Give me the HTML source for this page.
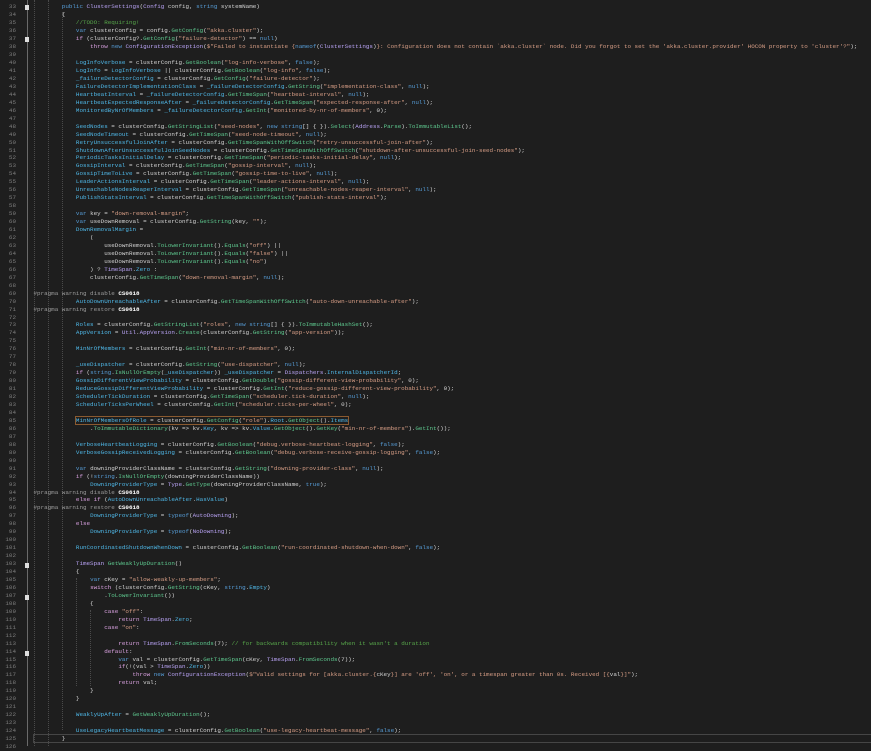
<!DOCTYPE html>
<html><head><meta charset="utf-8">
<style>
html,body{margin:0;padding:0;background:#1e1e1e;width:871px;height:746px;overflow:hidden}
#ed{position:absolute;left:0;top:-4.6px;width:871px}
.l{position:relative;height:7.962px;line-height:7.962px;white-space:pre;font-family:"Liberation Mono",monospace;font-size:5.9px;color:#d4d4d4}
.n{position:absolute;left:0;width:16px;text-align:right;color:#7e7e7e}
.c0{position:absolute;left:33.5px}
.k{color:#569cd6}.c{color:#d8a0df}.t{color:#b9a3f5}.p{color:#4fb8e8}.m{color:#5ec98f}.s{color:#d69d85}.g{color:#57a64a}.pr{color:#9b9b9b}.w{color:#fff;font-weight:bold}.r{color:#8a8a8a;font-size:4.5px}
.gl{position:absolute;width:0;border-left:1px dotted #4a4a4a}
.fold{position:absolute;left:25px;width:4px;height:5px;background:#ddd}
</style></head><body>
<div style="position:absolute;left:27px;top:0;width:1px;height:746px;background:#6a6a6a"></div>
<div class="gl" style="left:34px;top:0;height:746px"></div>
<div class="gl" style="left:48px;top:0;height:746px"></div>
<div class="gl" style="left:62px;top:12px;height:718px"></div>
<div class="gl" style="left:76px;top:578px;height:108px"></div>
<div class="gl" style="left:90px;top:610px;height:76px"></div>
<div class="fold" style="top:5px"></div>
<div class="fold" style="top:37px"></div>
<div class="fold" style="top:563px"></div>
<div class="fold" style="top:595px"></div>
<div class="fold" style="top:651px"></div>
<div style="position:absolute;left:33px;top:734px;width:838px;height:7px;border:1px solid #464646"></div>
<div id="ed">
<div class="l"><span class="c0">        <span class="r">0 references</span></span></div>
<div class="l"><span class="n">33</span><span class="c0">        <span class="k">public</span> <span class="t">ClusterSettings</span>(<span class="t">Config</span> config, <span class="k">string</span> systemName)</span></div>
<div class="l"><span class="n">34</span><span class="c0">        {</span></div>
<div class="l"><span class="n">35</span><span class="c0">            <span class="g">//TODO: Requiring!</span></span></div>
<div class="l"><span class="n">36</span><span class="c0">            <span class="k">var</span> clusterConfig = config.<span class="m">GetConfig</span>(<span class="s">"akka.cluster"</span>);</span></div>
<div class="l"><span class="n">37</span><span class="c0">            <span class="c">if</span> (clusterConfig?.<span class="m">GetConfig</span>(<span class="s">"failure-detector"</span>) == <span class="k">null</span>)</span></div>
<div class="l"><span class="n">38</span><span class="c0">                <span class="c">throw</span> <span class="k">new</span> <span class="t">ConfigurationException</span>(<span class="s">$"Failed to instantiate {</span><span class="k">nameof</span>(<span class="t">ClusterSettings</span>)<span class="s">}: Configuration does not contain `akka.cluster` node. Did you forgot to set the 'akka.cluster.provider' HOCON property to 'cluster'?"</span>);</span></div>
<div class="l"><span class="n">39</span></div>
<div class="l"><span class="n">40</span><span class="c0">            <span class="p">LogInfoVerbose</span> = clusterConfig.<span class="m">GetBoolean</span>(<span class="s">"log-info-verbose"</span>, <span class="k">false</span>);</span></div>
<div class="l"><span class="n">41</span><span class="c0">            <span class="p">LogInfo</span> = <span class="p">LogInfoVerbose</span> || clusterConfig.<span class="m">GetBoolean</span>(<span class="s">"log-info"</span>, <span class="k">false</span>);</span></div>
<div class="l"><span class="n">42</span><span class="c0">            <span class="p">_failureDetectorConfig</span> = clusterConfig.<span class="m">GetConfig</span>(<span class="s">"failure-detector"</span>);</span></div>
<div class="l"><span class="n">43</span><span class="c0">            <span class="p">FailureDetectorImplementationClass</span> = <span class="p">_failureDetectorConfig</span>.<span class="m">GetString</span>(<span class="s">"implementation-class"</span>, <span class="k">null</span>);</span></div>
<div class="l"><span class="n">44</span><span class="c0">            <span class="p">HeartbeatInterval</span> = <span class="p">_failureDetectorConfig</span>.<span class="m">GetTimeSpan</span>(<span class="s">"heartbeat-interval"</span>, <span class="k">null</span>);</span></div>
<div class="l"><span class="n">45</span><span class="c0">            <span class="p">HeartbeatExpectedResponseAfter</span> = <span class="p">_failureDetectorConfig</span>.<span class="m">GetTimeSpan</span>(<span class="s">"expected-response-after"</span>, <span class="k">null</span>);</span></div>
<div class="l"><span class="n">46</span><span class="c0">            <span class="p">MonitoredByNrOfMembers</span> = <span class="p">_failureDetectorConfig</span>.<span class="m">GetInt</span>(<span class="s">"monitored-by-nr-of-members"</span>, 0);</span></div>
<div class="l"><span class="n">47</span></div>
<div class="l"><span class="n">48</span><span class="c0">            <span class="p">SeedNodes</span> = clusterConfig.<span class="m">GetStringList</span>(<span class="s">"seed-nodes"</span>, <span class="k">new</span> <span class="k">string</span>[] { }).<span class="m">Select</span>(<span class="t">Address</span>.<span class="m">Parse</span>).<span class="m">ToImmutableList</span>();</span></div>
<div class="l"><span class="n">49</span><span class="c0">            <span class="p">SeedNodeTimeout</span> = clusterConfig.<span class="m">GetTimeSpan</span>(<span class="s">"seed-node-timeout"</span>, <span class="k">null</span>);</span></div>
<div class="l"><span class="n">50</span><span class="c0">            <span class="p">RetryUnsuccessfulJoinAfter</span> = clusterConfig.<span class="m">GetTimeSpanWithOffSwitch</span>(<span class="s">"retry-unsuccessful-join-after"</span>);</span></div>
<div class="l"><span class="n">51</span><span class="c0">            <span class="p">ShutdownAfterUnsuccessfulJoinSeedNodes</span> = clusterConfig.<span class="m">GetTimeSpanWithOffSwitch</span>(<span class="s">"shutdown-after-unsuccessful-join-seed-nodes"</span>);</span></div>
<div class="l"><span class="n">52</span><span class="c0">            <span class="p">PeriodicTasksInitialDelay</span> = clusterConfig.<span class="m">GetTimeSpan</span>(<span class="s">"periodic-tasks-initial-delay"</span>, <span class="k">null</span>);</span></div>
<div class="l"><span class="n">53</span><span class="c0">            <span class="p">GossipInterval</span> = clusterConfig.<span class="m">GetTimeSpan</span>(<span class="s">"gossip-interval"</span>, <span class="k">null</span>);</span></div>
<div class="l"><span class="n">54</span><span class="c0">            <span class="p">GossipTimeToLive</span> = clusterConfig.<span class="m">GetTimeSpan</span>(<span class="s">"gossip-time-to-live"</span>, <span class="k">null</span>);</span></div>
<div class="l"><span class="n">55</span><span class="c0">            <span class="p">LeaderActionsInterval</span> = clusterConfig.<span class="m">GetTimeSpan</span>(<span class="s">"leader-actions-interval"</span>, <span class="k">null</span>);</span></div>
<div class="l"><span class="n">56</span><span class="c0">            <span class="p">UnreachableNodesReaperInterval</span> = clusterConfig.<span class="m">GetTimeSpan</span>(<span class="s">"unreachable-nodes-reaper-interval"</span>, <span class="k">null</span>);</span></div>
<div class="l"><span class="n">57</span><span class="c0">            <span class="p">PublishStatsInterval</span> = clusterConfig.<span class="m">GetTimeSpanWithOffSwitch</span>(<span class="s">"publish-stats-interval"</span>);</span></div>
<div class="l"><span class="n">58</span></div>
<div class="l"><span class="n">59</span><span class="c0">            <span class="k">var</span> key = <span class="s">"down-removal-margin"</span>;</span></div>
<div class="l"><span class="n">60</span><span class="c0">            <span class="k">var</span> useDownRemoval = clusterConfig.<span class="m">GetString</span>(key, <span class="s">""</span>);</span></div>
<div class="l"><span class="n">61</span><span class="c0">            <span class="p">DownRemovalMargin</span> =</span></div>
<div class="l"><span class="n">62</span><span class="c0">                (</span></div>
<div class="l"><span class="n">63</span><span class="c0">                    useDownRemoval.<span class="m">ToLowerInvariant</span>().<span class="m">Equals</span>(<span class="s">"off"</span>) ||</span></div>
<div class="l"><span class="n">64</span><span class="c0">                    useDownRemoval.<span class="m">ToLowerInvariant</span>().<span class="m">Equals</span>(<span class="s">"false"</span>) ||</span></div>
<div class="l"><span class="n">65</span><span class="c0">                    useDownRemoval.<span class="m">ToLowerInvariant</span>().<span class="m">Equals</span>(<span class="s">"no"</span>)</span></div>
<div class="l"><span class="n">66</span><span class="c0">                ) ? <span class="t">TimeSpan</span>.<span class="p">Zero</span> :</span></div>
<div class="l"><span class="n">67</span><span class="c0">                clusterConfig.<span class="m">GetTimeSpan</span>(<span class="s">"down-removal-margin"</span>, <span class="k">null</span>);</span></div>
<div class="l"><span class="n">68</span></div>
<div class="l"><span class="n">69</span><span class="c0"><span class="pr">#pragma warning disable</span> <span class="w">CS0618</span></span></div>
<div class="l"><span class="n">70</span><span class="c0">            <span class="p">AutoDownUnreachableAfter</span> = clusterConfig.<span class="m">GetTimeSpanWithOffSwitch</span>(<span class="s">"auto-down-unreachable-after"</span>);</span></div>
<div class="l"><span class="n">71</span><span class="c0"><span class="pr">#pragma warning restore</span> <span class="w">CS0618</span></span></div>
<div class="l"><span class="n">72</span></div>
<div class="l"><span class="n">73</span><span class="c0">            <span class="p">Roles</span> = clusterConfig.<span class="m">GetStringList</span>(<span class="s">"roles"</span>, <span class="k">new</span> <span class="k">string</span>[] { }).<span class="m">ToImmutableHashSet</span>();</span></div>
<div class="l"><span class="n">74</span><span class="c0">            <span class="p">AppVersion</span> = <span class="t">Util</span>.<span class="t">AppVersion</span>.<span class="m">Create</span>(clusterConfig.<span class="m">GetString</span>(<span class="s">"app-version"</span>));</span></div>
<div class="l"><span class="n">75</span></div>
<div class="l"><span class="n">76</span><span class="c0">            <span class="p">MinNrOfMembers</span> = clusterConfig.<span class="m">GetInt</span>(<span class="s">"min-nr-of-members"</span>, 0);</span></div>
<div class="l"><span class="n">77</span></div>
<div class="l"><span class="n">78</span><span class="c0">            <span class="p">_useDispatcher</span> = clusterConfig.<span class="m">GetString</span>(<span class="s">"use-dispatcher"</span>, <span class="k">null</span>);</span></div>
<div class="l"><span class="n">79</span><span class="c0">            <span class="c">if</span> (<span class="k">string</span>.<span class="m">IsNullOrEmpty</span>(<span class="p">_useDispatcher</span>)) <span class="p">_useDispatcher</span> = <span class="t">Dispatchers</span>.<span class="p">InternalDispatcherId</span>;</span></div>
<div class="l"><span class="n">80</span><span class="c0">            <span class="p">GossipDifferentViewProbability</span> = clusterConfig.<span class="m">GetDouble</span>(<span class="s">"gossip-different-view-probability"</span>, 0);</span></div>
<div class="l"><span class="n">81</span><span class="c0">            <span class="p">ReduceGossipDifferentViewProbability</span> = clusterConfig.<span class="m">GetInt</span>(<span class="s">"reduce-gossip-different-view-probability"</span>, 0);</span></div>
<div class="l"><span class="n">82</span><span class="c0">            <span class="p">SchedulerTickDuration</span> = clusterConfig.<span class="m">GetTimeSpan</span>(<span class="s">"scheduler.tick-duration"</span>, <span class="k">null</span>);</span></div>
<div class="l"><span class="n">83</span><span class="c0">            <span class="p">SchedulerTicksPerWheel</span> = clusterConfig.<span class="m">GetInt</span>(<span class="s">"scheduler.ticks-per-wheel"</span>, 0);</span></div>
<div class="l"><span class="n">84</span></div>
<div class="l"><span class="n">85</span><span class="c0">            <span style="outline:1px solid #8a5a30"><span class="p">MinNrOfMembersOfRole</span> = clusterConfig.<span class="m">GetConfig</span>(<span class="s">"role"</span>).<span class="p">Root</span>.<span class="m">GetObject</span>().<span class="p">Items</span></span></span></div>
<div class="l"><span class="n">86</span><span class="c0">                .<span class="m">ToImmutableDictionary</span>(kv =&gt; kv.<span class="p">Key</span>, kv =&gt; kv.<span class="p">Value</span>.<span class="m">GetObject</span>().<span class="m">GetKey</span>(<span class="s">"min-nr-of-members"</span>).<span class="m">GetInt</span>());</span></div>
<div class="l"><span class="n">87</span></div>
<div class="l"><span class="n">88</span><span class="c0">            <span class="p">VerboseHeartbeatLogging</span> = clusterConfig.<span class="m">GetBoolean</span>(<span class="s">"debug.verbose-heartbeat-logging"</span>, <span class="k">false</span>);</span></div>
<div class="l"><span class="n">89</span><span class="c0">            <span class="p">VerboseGossipReceivedLogging</span> = clusterConfig.<span class="m">GetBoolean</span>(<span class="s">"debug.verbose-receive-gossip-logging"</span>, <span class="k">false</span>);</span></div>
<div class="l"><span class="n">90</span></div>
<div class="l"><span class="n">91</span><span class="c0">            <span class="k">var</span> downingProviderClassName = clusterConfig.<span class="m">GetString</span>(<span class="s">"downing-provider-class"</span>, <span class="k">null</span>);</span></div>
<div class="l"><span class="n">92</span><span class="c0">            <span class="c">if</span> (!<span class="k">string</span>.<span class="m">IsNullOrEmpty</span>(downingProviderClassName))</span></div>
<div class="l"><span class="n">93</span><span class="c0">                <span class="p">DowningProviderType</span> = <span class="t">Type</span>.<span class="m">GetType</span>(downingProviderClassName, <span class="k">true</span>);</span></div>
<div class="l"><span class="n">94</span><span class="c0"><span class="pr">#pragma warning disable</span> <span class="w">CS0618</span></span></div>
<div class="l"><span class="n">95</span><span class="c0">            <span class="c">else if</span> (<span class="p">AutoDownUnreachableAfter</span>.<span class="p">HasValue</span>)</span></div>
<div class="l"><span class="n">96</span><span class="c0"><span class="pr">#pragma warning restore</span> <span class="w">CS0618</span></span></div>
<div class="l"><span class="n">97</span><span class="c0">                <span class="p">DowningProviderType</span> = <span class="k">typeof</span>(<span class="t">AutoDowning</span>);</span></div>
<div class="l"><span class="n">98</span><span class="c0">            <span class="c">else</span></span></div>
<div class="l"><span class="n">99</span><span class="c0">                <span class="p">DowningProviderType</span> = <span class="k">typeof</span>(<span class="t">NoDowning</span>);</span></div>
<div class="l"><span class="n">100</span></div>
<div class="l"><span class="n">101</span><span class="c0">            <span class="p">RunCoordinatedShutdownWhenDown</span> = clusterConfig.<span class="m">GetBoolean</span>(<span class="s">"run-coordinated-shutdown-when-down"</span>, <span class="k">false</span>);</span></div>
<div class="l"><span class="n">102</span></div>
<div class="l"><span class="n">103</span><span class="c0">            <span class="t">TimeSpan</span> <span class="m">GetWeaklyUpDuration</span>()</span></div>
<div class="l"><span class="n">104</span><span class="c0">            {</span></div>
<div class="l"><span class="n">105</span><span class="c0">                <span class="k">var</span> cKey = <span class="s">"allow-weakly-up-members"</span>;</span></div>
<div class="l"><span class="n">106</span><span class="c0">                <span class="c">switch</span> (clusterConfig.<span class="m">GetString</span>(cKey, <span class="k">string</span>.<span class="p">Empty</span>)</span></div>
<div class="l"><span class="n">107</span><span class="c0">                    .<span class="m">ToLowerInvariant</span>())</span></div>
<div class="l"><span class="n">108</span><span class="c0">                {</span></div>
<div class="l"><span class="n">109</span><span class="c0">                    <span class="c">case</span> <span class="s">"off"</span>:</span></div>
<div class="l"><span class="n">110</span><span class="c0">                        <span class="c">return</span> <span class="t">TimeSpan</span>.<span class="p">Zero</span>;</span></div>
<div class="l"><span class="n">111</span><span class="c0">                    <span class="c">case</span> <span class="s">"on"</span>:</span></div>
<div class="l"><span class="n">112</span></div>
<div class="l"><span class="n">113</span><span class="c0">                        <span class="c">return</span> <span class="t">TimeSpan</span>.<span class="m">FromSeconds</span>(7); <span class="g">// for backwards compatibility when it wasn't a duration</span></span></div>
<div class="l"><span class="n">114</span><span class="c0">                    <span class="c">default</span>:</span></div>
<div class="l"><span class="n">115</span><span class="c0">                        <span class="k">var</span> val = clusterConfig.<span class="m">GetTimeSpan</span>(cKey, <span class="t">TimeSpan</span>.<span class="m">FromSeconds</span>(7));</span></div>
<div class="l"><span class="n">116</span><span class="c0">                        <span class="c">if</span>(!(val &gt; <span class="t">TimeSpan</span>.<span class="p">Zero</span>))</span></div>
<div class="l"><span class="n">117</span><span class="c0">                            <span class="c">throw</span> <span class="k">new</span> <span class="t">ConfigurationException</span>(<span class="s">$"Valid settings for [akka.cluster.{</span>cKey<span class="s">}] are 'off', 'on', or a timespan greater than 0s. Received [{</span>val<span class="s">}]"</span>);</span></div>
<div class="l"><span class="n">118</span><span class="c0">                        <span class="c">return</span> val;</span></div>
<div class="l"><span class="n">119</span><span class="c0">                }</span></div>
<div class="l"><span class="n">120</span><span class="c0">            }</span></div>
<div class="l"><span class="n">121</span></div>
<div class="l"><span class="n">122</span><span class="c0">            <span class="p">WeaklyUpAfter</span> = <span class="m">GetWeaklyUpDuration</span>();</span></div>
<div class="l"><span class="n">123</span></div>
<div class="l"><span class="n">124</span><span class="c0">            <span class="p">UseLegacyHeartbeatMessage</span> = clusterConfig.<span class="m">GetBoolean</span>(<span class="s">"use-legacy-heartbeat-message"</span>, <span class="k">false</span>);</span></div>
<div class="l"><span class="n">125</span><span class="c0">        }</span></div>
<div class="l"><span class="n">126</span></div>
</div>
</body></html>
